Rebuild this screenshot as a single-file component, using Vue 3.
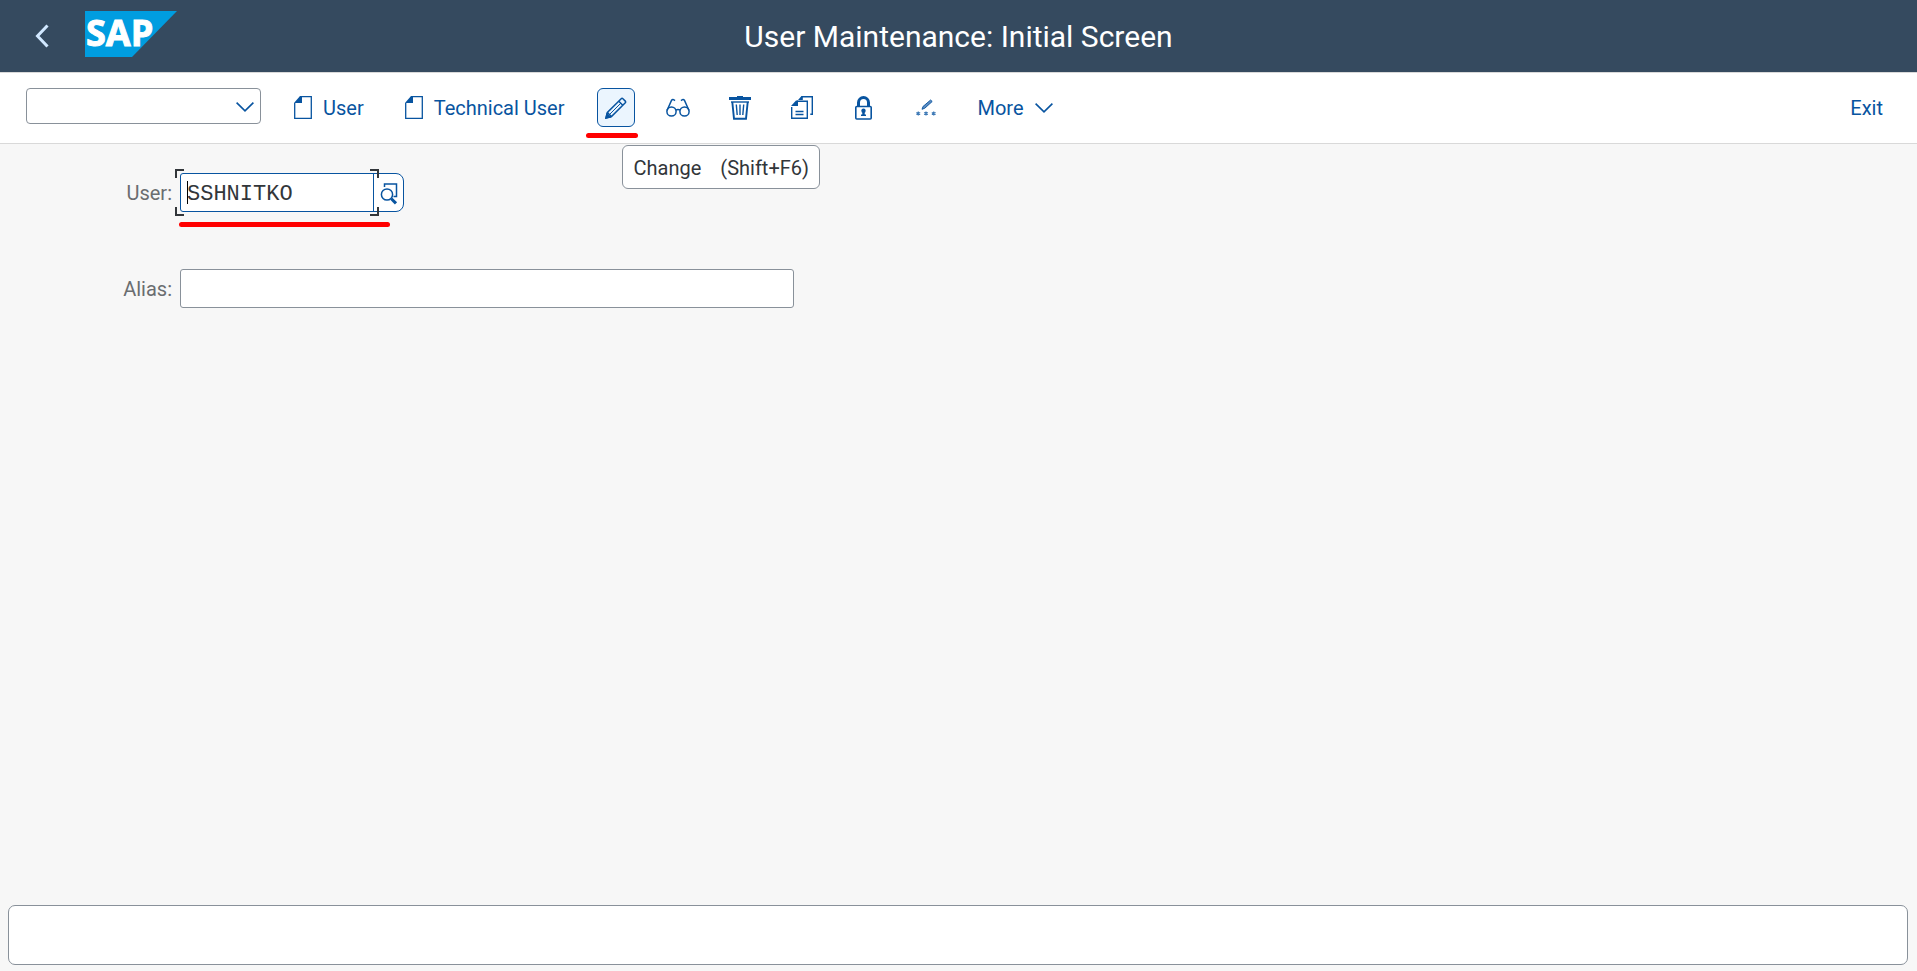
<script setup>
import { ref } from 'vue'

const user = ref('SSHNITKO')
const alias = ref('')
const command = ref('')
</script>

<template>
  <div class="screen">
    <header class="shell">
      <button class="back" type="button" aria-label="Back">
        <svg width="14" height="24" viewBox="0 0 14 24" fill="none" stroke="#d1e8ff" stroke-width="3">
          <path d="M12.5 1.5 2.500 12l10 10.500" />
        </svg>
      </button>
      <a class="logo" href="#" aria-label="Home">
        <svg width="92" height="46" viewBox="0 0 92 46">
          <path d="M0 0h92L47 46H0z" fill="#009de0" />
          <text class="logo-text" x="1" y="35">SAP</text>
        </svg>
      </a>
      <h1 class="title">User Maintenance: Initial Screen</h1>
    </header>

    <nav class="toolbar" aria-label="Functions">
      <div class="command">
        <input v-model="command" type="text" aria-label="Command" />
        <button type="button" aria-label="Command history">
          <svg width="18" height="10" viewBox="0 0 18 10" fill="none" stroke="#0854a0" stroke-width="1.600">
            <path d="M.6 .6 9 8.800 17.400 .6" />
          </svg>
        </button>
      </div>

      <button v-for="label in ['User', 'Technical User']" :key="label" class="tool" type="button">
        <svg width="18" height="23" viewBox="0 0 18 23">
          <path d="M7 .7h10.300v21.600H.7V7" fill="none" stroke="#0854a0" stroke-width="1.300" />
          <path d="M0 7 6 0h2v7H0z" fill="#0854a0" />
        </svg>
        <span>{{ label }}</span>
      </button>

      <div class="change">
        <button class="tool icon active" type="button" aria-label="Change" aria-describedby="change-tip">
          <svg width="22" height="22" viewBox="0 0 22 22" fill="none" stroke="#0854a0" stroke-width="1.500">
            <path d="M1 21 2.400 15.500 16.200 1.700a1.200 1.200 0 0 1 1.700 0l2.400 2.400a1.200 1.200 0 0 1 0 1.700L6.500 19.600z" />
            <path d="m13.800 4.200 4 4M2.400 15.500l4.100 4.100" />
            <path d="M5 17 15.800 6.200" stroke-width="1" />
            <path d="m1 21 1-4 3 3z" fill="#0854a0" />
          </svg>
        </button>
        <span class="mark mark-change"></span>
        <span id="change-tip" class="tip" role="tooltip"><span>Change</span><span>(Shift+F6)</span></span>
      </div>

      <button class="tool icon" type="button" aria-label="Display">
        <svg width="24" height="20" viewBox="0 0 24 20" fill="none" stroke="#0854a0" stroke-width="1.500">
          <circle cx="5.500" cy="13.500" r="4.600" />
          <circle cx="18.500" cy="13.500" r="4.600" />
          <path d="M9.800 12.200q2.200-1.400 4.400 0M1 12.500 5.600 2.200Q6.800.6 9 2.600M23 12.500 18.400 2.200Q17.200.6 15 2.600" />
        </svg>
      </button>

      <button class="tool icon" type="button" aria-label="Delete">
        <svg width="22" height="24" viewBox="0 0 22 24" fill="none" stroke="#0854a0">
          <path d="M0 2.500h22" stroke-width="3" />
          <path d="M8 .8h6" stroke-width="1.600" />
          <path d="M2 6h18" stroke-width="1.400" />
          <path d="M3.300 6 5 22.700h12L18.700 6" stroke-width="1.900" />
          <path d="m7.300 8.500.9 10.500M11 8.500V19M14.700 8.500 13.800 19" stroke-width="1.400" />
        </svg>
      </button>

      <button class="tool icon" type="button" aria-label="Copy">
        <svg width="22" height="23" viewBox="0 0 22 23" fill="none" stroke="#0854a0" stroke-width="1.400">
          <path d="M6 5.200h10.300v17.100H.7V11" />
          <path d="M0 10 5 4.500h2V10H0z" fill="#0854a0" stroke="none" />
          <path d="M10.500.7h10.800v17.600h-2" />
          <path d="M7 4 10.500 0h1.300v4z" fill="#0854a0" stroke="none" />
          <path d="M4.500 15.500h8M4.500 18.500h8" />
        </svg>
      </button>

      <button class="tool icon" type="button" aria-label="Lock/Unlock">
        <svg width="17" height="24" viewBox="0 0 17 24" fill="none" stroke="#0854a0">
          <path d="M3.500 11V6.500a5 5 0 0 1 10 0V11" stroke-width="3" />
          <rect x=".8" y="10.500" width="15.400" height="12.500" rx="1" stroke-width="1.600" />
          <circle cx="8.500" cy="14.800" r="2.200" fill="#0854a0" stroke="none" />
          <path d="M7.500 15h2l.3 3.500h1.200V20H6v-1.500h1.200z" fill="#0854a0" stroke="none" />
        </svg>
      </button>

      <button class="tool icon" type="button" aria-label="Change Password">
        <svg width="20" height="18" viewBox="0 0 20 18" fill="none" stroke="#0854a0">
          <path d="m6 10.300 1-2.800L14.600 1l1.600 1.500-7.400 6.700z" fill="#5c8cc0" stroke-width=".9" />
          <g stroke="#3f7ab6" stroke-width="1.200">
            <path d="M2.300 12.500v4M.4 13.500l3.800 2M4.200 13.500l-3.800 2" />
            <path d="M10 12.500v4M8.100 13.500l3.800 2M11.900 13.500l-3.800 2" />
            <path d="M17.700 12.500v4M15.800 13.500l3.800 2M19.600 13.500l-3.800 2" />
          </g>
        </svg>
      </button>

      <button class="tool" type="button">
        <span>More</span>
        <svg width="18" height="10" viewBox="0 0 18 10" fill="none" stroke="#0854a0" stroke-width="1.600">
          <path d="M.6 .6 9 8.800 17.400 .6" />
        </svg>
      </button>

      <button class="tool exit" type="button">Exit</button>
    </nav>

    <main class="form">
      <div class="row">
        <label for="user">User:</label>
        <div class="user-field">
          <input id="user" v-model="user" type="text" />
          <button type="button" aria-label="Value help">
            <svg width="18" height="22" viewBox="0 0 18 22" fill="none" stroke="#0854a0" stroke-width="1.500">
              <path d="M4.500 4V1h12v12.500h-3" />
              <circle cx="7" cy="11.500" r="5.600" />
              <path d="m11.300 15.700 4.700 4.700" stroke-width="3" />
            </svg>
          </button>
          <span class="caret"></span>
          <svg class="focus" width="204" height="47" viewBox="0 0 204 47" fill="none" stroke="#32363a" stroke-width="2">
            <path d="M9 1H1v8M195 1h8v8M9 46H1v-8M195 46h8v-8" />
          </svg>
          <span class="mark mark-user"></span>
        </div>
      </div>
      <div class="row">
        <label for="alias">Alias:</label>
        <input id="alias" v-model="alias" class="alias" type="text" />
      </div>
    </main>

    <footer class="status" role="status"></footer>
  </div>
</template>

<style>
body {
  margin: 0;
}
</style>

<style scoped>
.screen {
  display: flex;
  flex-direction: column;
  min-height: 100vh;
  background: #f7f7f7;
  font-family: Roboto, "Noto Sans", sans-serif;
  font-size: 20px;
  line-height: 24px;
  color: #32363a;
}
.screen *,
.screen {
  box-sizing: border-box;
}
button,
input {
  margin: 0;
  padding: 0;
  border: 0;
  background: none;
  font: inherit;
  color: inherit;
  outline: 0;
}
svg {
  display: block;
  flex: none;
  overflow: visible;
}
.shell {
  position: relative;
  display: flex;
  align-items: center;
  height: 72px;
  padding: 0 24px;
  background: #354a5f;
}
.back {
  display: flex;
  justify-content: center;
  width: 36px;
}
.logo {
  margin: 0 0 4px 25px;
}
.logo-text {
  font-family: "Open Sans", sans-serif;
  font-weight: 700;
  font-size: 36px;
  fill: #fff;
  stroke: #fff;
  stroke-width: 1px;
}
.title {
  position: absolute;
  inset: 0;
  margin: 0;
  font-weight: 400;
  font-size: 30px;
  line-height: 73px;
  text-align: center;
  color: #fff;
  pointer-events: none;
}
.toolbar {
  display: flex;
  align-items: center;
  gap: 24px;
  height: 72px;
  padding: 0 26px 1px;
  border-top: 1px solid #d9d9d9;
  border-bottom: 1px solid #d9d9d9;
  background: #fff;
  color: #0854a0;
}
.command {
  display: flex;
  align-items: center;
  width: 235px;
  height: 36px;
  margin-bottom: 3px;
  padding-right: 6px;
  border: 1px solid #89919a;
  border-radius: 4px;
}
.command input {
  flex: 1;
  min-width: 0;
  height: 100%;
}
.command button {
  padding-top: 2px;
}
.tool {
  display: flex;
  align-items: center;
  gap: 11px;
  height: 39px;
  padding: 0 7px 0 8px;
  border: 1px solid transparent;
  border-radius: 6px;
}
.icon {
  justify-content: center;
  width: 38px;
  padding: 0;
}
.active {
  border-color: #0854a0;
  background: #ebf5fe;
}
.exit {
  margin-left: auto;
}
.change {
  position: relative;
}
.mark {
  position: absolute;
  height: 5px;
  border-radius: 3px;
  background: #f00;
}
.mark-change {
  top: 45px;
  left: -11px;
  width: 52px;
}
.tip {
  position: absolute;
  z-index: 1;
  top: 57px;
  left: 25px;
  display: flex;
  gap: 19px;
  padding: 10px 10px 8px 11px;
  border: 1px solid #89919a;
  border-radius: 6px;
  background: #fff;
  color: #32363a;
  white-space: nowrap;
}
.form {
  flex: 1;
  display: flex;
  flex-direction: column;
  gap: 57px;
  padding: 29px 24px;
}
.row {
  display: flex;
  align-items: center;
  gap: 8px;
}
label {
  width: 148px;
  text-align: right;
  color: #6a6d70;
}
.user-field {
  position: relative;
  display: flex;
  height: 39px;
  border: 1px solid #0854a0;
  border-radius: 3px 8px 8px 3px;
  background: #fff;
}
.user-field input {
  width: 193px;
  padding: 4px 0 0 6px;
  border-right: 1px solid #0854a0;
  font-family: "Liberation Mono", monospace;
  font-size: 22px;
}
.user-field button {
  display: flex;
  align-items: center;
  justify-content: center;
  width: 29px;
  padding-top: 2px;
}
.caret {
  position: absolute;
  top: 7px;
  left: 6px;
  width: 1px;
  height: 23px;
  background: #000;
}
.focus {
  position: absolute;
  top: -5px;
  left: -6px;
  pointer-events: none;
}
.mark-user {
  top: 48px;
  left: -2px;
  width: 211px;
}
.alias {
  width: 614px;
  height: 39px;
  padding: 0 8px;
  border: 1px solid #89919a;
  border-radius: 3px;
  background: #fff;
}
.status {
  height: 60px;
  margin: 0 9px 6px 8px;
  border: 1px solid #89919a;
  border-radius: 7px;
  background: #fff;
}
</style>
